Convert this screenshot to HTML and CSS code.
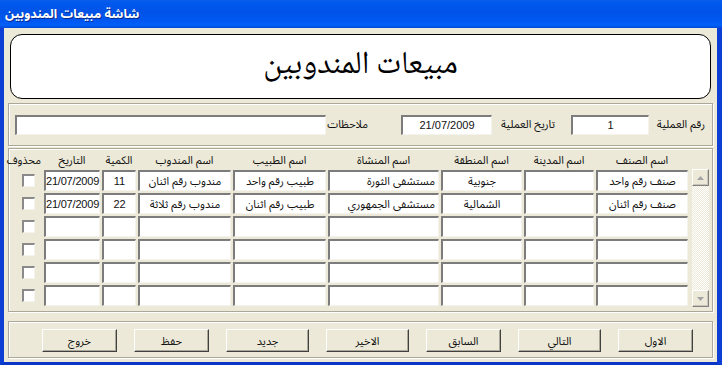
FILE: index.html
```html
<!DOCTYPE html>
<html dir="rtl">
<head>
    <meta charset="utf-8" />
    <title>شاشة مبيعات المندوبين</title>
    <link rel="stylesheet" href="styles.css">
</head>
<body>
    <div class="window">
        <div class="titlebar"><span>شاشة مبيعات المندوبين</span></div>
        <div class="client">
            <div class="banner">مبيعات المندوبين</div>

            <div class="frame info">
                <label class="lbl-num">رقم العملية</label>
                <input type="text" class="field num" value="1" />
                <label class="lbl-date">تاريخ العملية</label>
                <input type="text" class="field date" value="21/07/2009" />
                <label class="lbl-notes">ملاحظات</label>
                <input type="text" class="field notes" value="" />
            </div>

            <div class="frame lines">
                <div class="grid">
                    <div class="head">اسم الصنف</div>
                    <div class="head">اسم المدينة</div>
                    <div class="head">اسم المنطقة</div>
                    <div class="head">اسم المنشاة</div>
                    <div class="head">اسم الطبيب</div>
                    <div class="head">اسم المندوب</div>
                    <div class="head">الكمية</div>
                    <div class="head">التاريخ</div>
                    <div class="head del">محذوف</div>

                    <div class="cell">صنف رقم واحد</div>
                    <div class="cell"></div>
                    <div class="cell">جنوبية</div>
                    <div class="cell start">مستشفى الثورة</div>
                    <div class="cell">طبيب رقم واحد</div>
                    <div class="cell">مندوب رقم اثنان</div>
                    <div class="cell">11</div>
                    <div class="cell date">21/07/2009</div>
                    <div class="check"><span class="box"></span></div>

                    <div class="cell">صنف رقم اثنان</div>
                    <div class="cell"></div>
                    <div class="cell">الشمالية</div>
                    <div class="cell start">مستشفى الجمهوري</div>
                    <div class="cell">طبيب رقم اثنان</div>
                    <div class="cell">مندوب رقم ثلاثة</div>
                    <div class="cell">22</div>
                    <div class="cell date">21/07/2009</div>
                    <div class="check"><span class="box"></span></div>

                    <div class="cell"></div><div class="cell"></div><div class="cell"></div>
                    <div class="cell"></div><div class="cell"></div><div class="cell"></div>
                    <div class="cell"></div><div class="cell"></div>
                    <div class="check"><span class="box"></span></div>

                    <div class="cell"></div><div class="cell"></div><div class="cell"></div>
                    <div class="cell"></div><div class="cell"></div><div class="cell"></div>
                    <div class="cell"></div><div class="cell"></div>
                    <div class="check"><span class="box"></span></div>

                    <div class="cell"></div><div class="cell"></div><div class="cell"></div>
                    <div class="cell"></div><div class="cell"></div><div class="cell"></div>
                    <div class="cell"></div><div class="cell"></div>
                    <div class="check"><span class="box"></span></div>

                    <div class="cell"></div><div class="cell"></div><div class="cell"></div>
                    <div class="cell"></div><div class="cell"></div><div class="cell"></div>
                    <div class="cell"></div><div class="cell"></div>
                    <div class="check"><span class="box"></span></div>
                </div>
                <div class="scrollbar">
                    <div class="arrow">
                        <svg width="7" height="4" viewBox="0 0 7 4"><path d="M0 4 L3.5 0 L7 4 Z" fill="#a3a3a3"/></svg>
                    </div>
                    <div class="track"></div>
                    <div class="arrow">
                        <svg width="7" height="4" viewBox="0 0 7 4"><path d="M0 0 L3.5 4 L7 0 Z" fill="#a3a3a3"/></svg>
                    </div>
                </div>
            </div>

            <div class="frame actions">
                <button class="btn">الاول</button>
                <button class="btn wide">التالي</button>
                <button class="btn">السابق</button>
                <button class="btn wide">الاخير</button>
                <button class="btn wide">جديد</button>
                <button class="btn">حفظ</button>
                <button class="btn">خروج</button>
            </div>
        </div>
    </div>
</body>
</html>
```

FILE: styles.css
```css
html, body {
    margin: 0;
    padding: 0;
}

body {
    font-family: "Liberation Sans", "Noto Sans Arabic", "Noto Naskh Arabic", "DejaVu Sans", sans-serif;
    font-size: 11px;
    color: #000;
    background: #ece9d8;
}

.window {
    width: 722px;
    height: 365px;
    display: flex;
    flex-direction: column;
    overflow: hidden;
}

.titlebar {
    height: 28px;
    flex: none;
    display: flex;
    align-items: center;
    direction: ltr;
    padding-left: 5px;
    background: linear-gradient(#0a5ee8 0%, #0058ee 10%, #0053e6 45%, #0059f4 80%, #0161f8 90%, #0147d6 100%);
    color: #fff;
    font-family: "Noto Sans Arabic", "DejaVu Sans", sans-serif;
    font-weight: bold;
    font-size: 12.5px;
    text-shadow: 1px 1px #0a2a8c;
}

.client {
    flex: 1;
    display: flex;
    flex-direction: column;
    background: #ece9d8;
    border-left: 4px solid #0d3fd4;
    border-right: 5px solid #0d3fd4;
    border-bottom: 5px solid #0a36c8;
    padding: 6px 4px 4px 4px;
}

.banner {
    height: 61px;
    margin: 0 2px;
    background: #fff;
    border: 1px solid #000;
    border-radius: 12px;
    display: flex;
    align-items: center;
    justify-content: center;
    font-family: "Noto Naskh Arabic", "DejaVu Sans", serif;
    font-size: 32px;
    padding-bottom: 2px;
}

.frame {
    border: 1px solid #aca899;
    box-shadow: inset 1px 1px #fff, 1px 1px #fff;
    box-sizing: border-box;
}

/* sunken text boxes */
.field,
.cell {
    box-sizing: border-box;
    background: #fff;
    border-style: solid;
    border-width: 2px 1px 1px 2px;
    border-color: #7c7c7c #f4f3ee #f4f3ee #7c7c7c;
    font-family: "Liberation Sans", "Noto Sans Arabic", "DejaVu Sans", sans-serif;
    font-size: 11px;
    color: #111;
}

.info {
    margin-top: 4px;
    height: 43px;
    display: flex;
    align-items: center;
    padding: 0 7px 0 6px;
}

.info label {
    flex: none;
    margin-left: 4px;
    white-space: nowrap;
    color: #111;
}

.lbl-num {
    width: 52px;
}

.lbl-date {
    width: 59px;
}

.lbl-notes {
    width: 38px;
}

.field {
    flex: none;
    height: 20px;
    padding: 0 2px;
    text-align: center;
    outline: none;
}

.field.num {
    width: 78px;
    margin-left: 16px;
}

.field.date {
    width: 91px;
    margin-left: 33px;
}

.field.notes {
    flex: 1;
    min-width: 0;
}

.lines {
    margin-top: 2px;
    height: 164px;
    display: flex;
    align-items: flex-start;
    padding: 3px 3px 0 0;
}

.grid {
    display: grid;
    grid-template-columns: 92px 70px 81px 111px 93px 93px 34px 56px 33px;
    grid-template-rows: 16px repeat(6, 21px);
    column-gap: 2px;
    row-gap: 2px;
    margin-right: 4px;
    order: 2;
}

.scrollbar {
    order: 1;
    width: 18px;
    height: 138px;
    margin-top: 17px;
    display: flex;
    flex-direction: column;
}

.head {
    text-align: center;
    white-space: nowrap;
    line-height: 16px;
    color: #111;
}

.head.del {
    text-align: right;
    padding-right: 1px;
}

.cell {
    display: flex;
    align-items: center;
    justify-content: center;
    white-space: nowrap;
    overflow: hidden;
}

.cell.start {
    justify-content: flex-start;
    padding-right: 3px;
}

.cell.date {
    direction: ltr;
    justify-content: flex-start;
    overflow: visible;
    letter-spacing: -0.2px;
}

.check {
    display: flex;
    align-items: center;
}

.box {
    width: 13px;
    height: 13px;
    box-sizing: border-box;
    margin-right: 7px;
    background: #fff;
    border-style: solid;
    border-width: 2px 1px 1px 2px;
    border-color: #8a8a8a #f4f3ee #f4f3ee #8a8a8a;
}

.arrow {
    height: 17px;
    flex: none;
    box-sizing: border-box;
    display: flex;
    align-items: center;
    justify-content: center;
    background: #ece9d8;
    border-style: solid;
    border-width: 1px;
    border-color: #fff #808080 #808080 #fff;
    box-shadow: inset -1px -1px #c9c6b7;
}

.track {
    flex: 1;
    background-color: #fff;
    background-image: repeating-conic-gradient(#ece9d8 0% 25%, #fff 0% 50%);
    background-size: 2px 2px;
}

.actions {
    margin-top: 9px;
    height: 37px;
    display: flex;
    align-items: flex-start;
    padding: 7px 19px 0 0;
    gap: 17px;
}

.btn {
    width: 75px;
    height: 23px;
    padding: 0;
    background: #ece9d8;
    border-style: solid;
    border-width: 1px;
    border-color: #fff #404040 #404040 #fff;
    box-shadow: inset -1px -1px #aca899;
    font-family: "Liberation Sans", "Noto Sans Arabic", "DejaVu Sans", sans-serif;
    font-size: 11px;
    color: #111;
}

.btn.wide {
    width: 83px;
}
```
